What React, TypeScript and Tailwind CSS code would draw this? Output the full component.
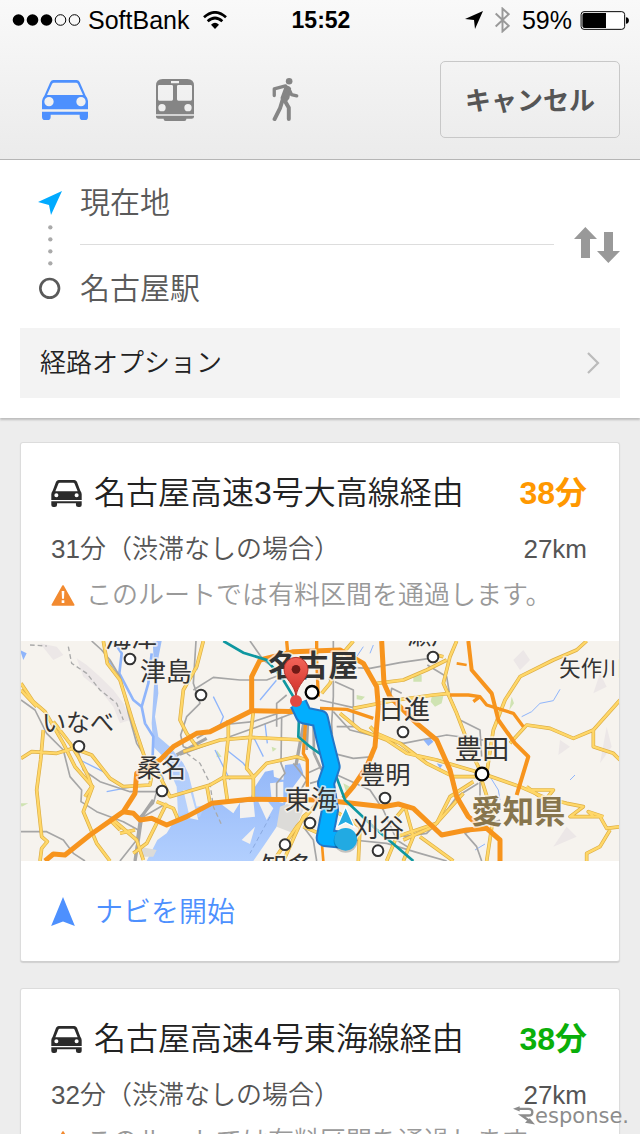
import React from 'react'

type Route = {
  id: number
  name: string
  time: string
  timeClass: string
  noTraffic: string
  distance: string
}

const routes: Route[] = [
  {
    id: 1,
    name: '名古屋高速3号大高線経由',
    time: '38分',
    timeClass: 'text-[#ff9800]',
    noTraffic: '31分（渋滞なしの場合）',
    distance: '27km',
  },
  {
    id: 2,
    name: '名古屋高速4号東海線経由',
    time: '38分',
    timeClass: 'text-[#0aaf0a]',
    noTraffic: '32分（渋滞なしの場合）',
    distance: '27km',
  },
]

const CarIcon = () => (
  <svg viewBox="0 0 138 120" className="h-10 w-[46px]" fill="currentColor" aria-hidden="true">
    <path
      fillRule="evenodd"
      d="M34 0H104Q110 0 113 6L131 47Q138 55 138 63V88H0V63Q0 55 7 47L25 6Q28 0 34 0ZM36 8Q32 8 30 12L15 45H123L108 12Q106 8 102 8ZM21 51A14 14 0 1 0 21 79A14 14 0 1 0 21 51ZM117 51A14 14 0 1 0 117 79A14 14 0 1 0 117 51Z"
    />
    <path d="M0 95H138V110Q138 120 129 120H122Q113 120 113 110V104H26V110Q26 120 17 120H9Q0 120 0 110Z" />
  </svg>
)

const SmallCarIcon = () => (
  <svg viewBox="0 0 90 80" className="mr-3 h-[27px] w-[31px] shrink-0 text-[#2b2b2b]" fill="currentColor" aria-hidden="true">
    <path
      fillRule="evenodd"
      d="M22 0H68Q73 0 76 5L86 32Q90 37 90 42V59H0V42Q0 37 4 32L14 5Q17 0 22 0ZM25 8Q22 8 21 11L12 33H78L69 11Q68 8 65 8ZM15 39A6 6 0 1 0 15 51A6 6 0 1 0 15 39ZM75 39A6 6 0 1 0 75 51A6 6 0 1 0 75 39Z"
    />
    <path d="M0 63H90V74Q90 80 84 80H80Q73 80 73 74V69H17V74Q17 80 10 80H6Q0 80 0 74Z" />
  </svg>
)

const TrainIcon = () => (
  <svg viewBox="0 0 114 126" className="h-[42px] w-[38px]" fill="currentColor" aria-hidden="true">
    <path
      fillRule="evenodd"
      d="M20 0H94Q114 0 114 20V106H0V20Q0 0 20 0ZM45 6V13H69V6ZM10 18Q6 18 6 22V61Q6 65 10 65H47Q51 65 51 61V22Q51 18 47 18ZM67 18Q63 18 63 22V61Q63 65 67 65H104Q108 65 108 61V22Q108 18 104 18ZM18 75A11 11 0 1 0 18 97A11 11 0 1 0 18 75ZM96 75A11 11 0 1 0 96 97A11 11 0 1 0 96 75Z"
    />
    <path d="M0 110H114V113Q114 119 107 119H91V121Q91 126 85 126H29Q23 126 23 121V119H7Q0 119 0 113Z" />
  </svg>
)

const WalkIcon = () => (
  <svg viewBox="0 0 80 130" className="h-[43px] w-[27px]" fill="none" stroke="currentColor" strokeLinejoin="round" strokeLinecap="round" aria-hidden="true">
    <circle cx="51" cy="10" r="10" fill="currentColor" stroke="none" />
    <path d="M42 25L29 60L38 72L48 60L53 32Z" fill="currentColor" strokeWidth="8" />
    <path d="M40 24L6 33V53" strokeWidth="10" />
    <path d="M49 30L58 50L74 54" strokeWidth="10" />
    <path d="M32 64L24 90L7 124" strokeWidth="12" />
    <path d="M37 67L50 90V124" strokeWidth="12" />
  </svg>
)

const StatusBar = () => (
  <div className="grid h-10 grid-cols-[1fr_auto_1fr] items-center pr-[10px] pl-3 text-black">
    <div className="flex items-center gap-[6px]">
      <svg viewBox="0 0 70 14" className="h-[14px] w-[70px]" aria-hidden="true">
        <circle cx="6.5" cy="7" r="5.8" />
        <circle cx="20.5" cy="7" r="5.8" />
        <circle cx="34.5" cy="7" r="5.8" />
        <circle cx="48.5" cy="7" r="5.3" fill="none" stroke="black" />
        <circle cx="62.5" cy="7" r="5.3" fill="none" stroke="black" />
      </svg>
      <span className="text-[25px] leading-8">SoftBank</span>
      <svg viewBox="0 0 72 54" className="ml-2 h-[18px] w-6" fill="none" stroke="black" strokeWidth="8" aria-hidden="true">
        <path d="M3 19Q36 -11 69 19" />
        <path d="M14 31Q36 11 58 31" />
        <path d="M24 41Q36 30 48 41L36 54Z" fill="black" stroke="none" />
      </svg>
    </div>
    <span className="text-[23px] leading-8 font-bold">15:52</span>
    <div className="flex items-center justify-end">
      <svg viewBox="0 0 54 54" className="mr-3 h-[18px] w-[18px]" aria-hidden="true">
        <path d="M54 0L30 54L27 27L0 24Z" />
      </svg>
      <svg viewBox="0 0 46 80" className="mr-3 h-[26px] w-[15px]" fill="none" stroke="#999" strokeWidth="6" aria-hidden="true">
        <path d="M2 20L42 58L23 75V5L42 22L2 60" />
      </svg>
      <span className="text-[25px] leading-8">59%</span>
      <svg viewBox="0 0 150 58" className="ml-2 h-[19px] w-[50px]" aria-hidden="true">
        <rect x="2" y="2" width="133" height="54" rx="9" fill="white" stroke="black" strokeWidth="3" />
        <path d="M12 6H78V52H12Q6 52 6 46V12Q6 6 12 6Z" />
        <path d="M139 19Q148 20 148 29T139 39Z" />
      </svg>
    </div>
  </div>
)

const SearchForm = () => (
  <section className="relative bg-white px-5 pt-5 pb-5 shadow-[0_2px_2px_#bdbdbd]">
    <div className="flex items-center">
      <div className="flex w-[60px] shrink-0 justify-center">
        <svg viewBox="0 0 72 324" className="h-[108px] w-6" aria-hidden="true">
          <path d="M72 0L39 72L33 42L0 33Z" fill="#00aaff" />
          <g fill="#aaa">
            <circle cx="37" cy="109" r="6.5" />
            <circle cx="37" cy="145" r="6.5" />
            <circle cx="37" cy="181" r="6.5" />
            <circle cx="37" cy="217" r="6.5" />
          </g>
          <circle cx="35" cy="292" r="28" fill="none" stroke="#5a5a5a" strokeWidth="8" />
        </svg>
      </div>
      <div className="min-w-0 flex-1">
        <input
          type="text"
          aria-label="出発地"
          defaultValue="現在地"
          className="block h-11 w-full pb-1 text-3xl font-[350] text-[#5a5a5a] outline-none"
        />
        <div className="mt-5 mb-[21px] h-px bg-[#ddd]" />
        <input
          type="text"
          aria-label="目的地"
          defaultValue="名古屋駅"
          className="block h-11 w-full pb-1 text-3xl font-[350] text-[#5a5a5a] outline-none"
        />
      </div>
      <button type="button" aria-label="出発地と目的地を入れ替え" className="ml-5 text-[#999]">
        <svg viewBox="0 0 138 108" className="h-9 w-[46px]" fill="currentColor" aria-hidden="true">
          <path d="M34 0L69 36H48V93H21V36H0Z" />
          <path d="M90 15H117V72H138L103 108L69 72H90Z" />
        </svg>
      </button>
    </div>
    <button
      type="button"
      className="mt-[18px] flex h-[70px] w-full items-center justify-between bg-[#f3f3f3] px-5 text-[26px] font-[350] text-[#222]"
    >
      経路オプション
      <svg viewBox="0 0 14 24" className="h-6 w-[14px]" fill="none" stroke="#bbb" strokeWidth="2.2" aria-hidden="true">
        <path d="M2 2L12 12L2 22" />
      </svg>
    </button>
  </section>
)

// map units are thirds of a pixel at the card's normal width
const yellowRoads = [
  'M3 130L40 185L75 215L130 310L165 380L218 440L190 515L230 610L270 663M70 270L62 360L50 450L65 590L82 605L65 625L60 663M3 355L35 335L110 340L160 325L215 345L270 415L310 440L390 435L400 380',
  'M3 150L50 200M100 245L150 310L175 350L205 410L215 440L195 470',
  'M250 3L262 70L300 120L340 250L370 340L380 370M550 3L530 80L490 150L480 240L500 280L530 320M490 335L600 300L690 292L850 300M415 400L450 470L570 435L610 412H700L740 370L830 350L860 360',
  'M625 240L625 290L612 410L622 480M700 215L690 300L680 385L700 410V480M560 435L570 490M440 490L380 610L340 640M345 570L300 580M270 540L300 570M410 485L460 505L475 540M280 540L350 600L370 660',
  'M1310 3L1290 50L1270 130L1310 220L1360 350L1385 400M1270 50L1230 40M1000 3L960 50L930 130L905 160M1070 130L1150 120L1220 90L1280 60',
  'M960 220L1020 270L1100 300L1160 340L1250 360L1385 400L1500 440L1580 475L1600 450H1520M1050 260L1070 280L1140 310L1220 370L1300 410H1380',
  'M1000 205L1130 180L1240 165L1290 160M1400 400L1420 270L1455 180L1500 110L1600 60L1670 30L1700 3',
  'M1470 310L1520 255L1590 265L1660 295L1720 270L1800 180M1720 270L1720 320L1780 340L1800 360M1520 440L1560 470L1640 490L1690 500L1650 530H1740L1760 565L1800 560',
  'M1720 530L1705 515L1750 530M1770 570L1740 620L1700 640V663M1100 663L1130 590L1250 550L1290 470L1360 425M1150 663L1180 590L1155 500L1130 530M1385 420L1420 530L1400 663M1200 590L1300 663',
  'M920 470L850 530L790 663M850 560L920 590M900 480L830 560L760 663M940 510L990 540L1020 560L1015 663M1330 460L1240 560L1150 600',
]

const RouteMap = () => (
  <svg viewBox="3 3 1794 660" className="block w-full" role="img" aria-label="名古屋周辺の地図">
    <defs>
      <linearGradient id="sea" x1="0" y1="0" x2="0" y2="1">
        <stop offset="0" stopColor="#93b7f8" />
        <stop offset="1" stopColor="#b2cffe" />
      </linearGradient>
      <linearGradient id="pin" x1="0" y1="0" x2="0" y2="1">
        <stop offset="0" stopColor="#f26459" />
        <stop offset="1" stopColor="#cf3029" />
      </linearGradient>
    </defs>
    <rect width="1800" height="666" fill="#f6f3ee" />

    <g fill="#ece7e7">
      <path d="M60 10L110 20L130 45L100 60ZM170 55L200 75L240 110L280 150L310 190L330 240L300 250L280 200L240 150L190 110Z" />
      <path d="M1510 30L1530 60L1500 90L1480 60ZM1740 100L1760 140L1720 160ZM1760 260L1775 320L1740 370ZM1620 300L1650 320L1615 345ZM1640 560L1670 590L1600 620Z" />
    </g>
    <g fill="#cfe3b2">
      <path d="M1235 170L1270 168L1265 190L1245 200L1232 185ZM1180 105H1205V125H1180ZM1475 170L1482 190L1468 210ZM1010 165L1035 170L1025 180L1010 178ZM970 430L990 440L978 455ZM0 490L25 490L5 500ZM590 330L605 350L590 352ZM755 320L770 326L758 335ZM1040 395L1050 410L1035 412ZM990 55H1010V68H990Z" />
    </g>

    <g fill="url(#sea)">
      <path d="M380 663L412 600L440 580L470 530L540 500L600 490L640 520L665 480L690 478L705 440L735 395L760 390L762 410L790 420L795 375L840 370L850 400L820 440L800 480L770 560L735 612L700 663Z" />
      <path d="M398 3H425L410 80L415 160L405 230L415 290L450 320L490 370L505 400L530 500L555 495L540 530L475 545L470 440L430 350L400 320L395 250L403 120L400 40Z" opacity="0.9" />
    </g>
    <g fill="none" stroke="#8fb5fb">
      <path strokeWidth="8" d="M280 3L305 40L298 100L340 180L365 200L375 250L400 290L398 350L430 420M395 40L385 130L365 200" />
      <path strokeWidth="4" d="M265 60L300 110M550 3L530 90M700 290L730 350M580 170L610 230L600 255M770 120L720 180M735 250L742 310M620 330L670 370L700 410M180 360L260 400M260 455L340 440M585 330L630 420" />
      <path strokeWidth="3" d="M1620 148L1600 182L1560 190L1535 215L1505 230M1650 420L1665 405M1410 410L1435 450L1440 480M1365 630L1395 612M1060 15L1050 40M1010 50L1030 20" />
    </g>
    <path d="M1210 300L1230 293L1240 305L1225 318ZM0 30L20 40L10 60ZM1250 370L1268 375L1260 385Z" fill="#8fb5fb" />
    <g fill="#f3f1ef">
      <path d="M660 490L700 480L705 530L660 535ZM665 600L705 560L690 612ZM715 485L740 480L760 505L740 540ZM490 450L510 450L535 540L510 535ZM750 430L790 425V490L755 480Z" />
    </g>
    <path d="M780 500L830 480L850 510L820 580L770 560ZM360 620L410 630L400 650H360Z" fill="#dcdbd8" />

    <g fill="none" stroke="#a6a6a6" strokeWidth="5" strokeLinejoin="round">
      <path d="M3 180L45 210L80 280L130 330L150 410L185 450L183 485L230 515L310 545L355 570L345 663M3 575H80L130 600L160 640L195 663" />
      <path d="M175 335L190 390L240 425L330 455H410L400 490L360 530L350 600L300 663M215 3L245 30L270 60L300 110L325 220L350 310L375 350" />
      <path d="M528 3L520 130L540 190L500 230L482 285L490 320L520 330M520 150L580 112L660 120H740L780 105M480 345L560 315L700 265L830 215" />
      <path d="M530 295L600 255L700 245L820 205M770 260V190L800 165M785 230L783 370L795 400L770 430V480M440 490L370 530" />
      <path d="M690 3L730 60L800 110M940 3V90L940 170L935 250L940 340L1000 355L1060 350M940 80L1050 85L1140 68L1230 55" />
      <path d="M945 125L1000 150V260H950M900 180L1010 205L1150 175L1290 160M1110 175L1115 145L1145 160" />
      <path d="M1222 75L1280 110L1290 170L1320 240L1380 270L1385 350M940 215L990 270L1150 310L1280 285L1390 300" />
      <path d="M940 400L1050 450L1090 510L1130 600L1170 625M1380 425V470M1375 430L1310 470L1260 540L1220 580L1150 590" />
      <path d="M1440 540L1335 580L1370 620L1385 663M1000 600L1100 610L1200 640L1280 663M850 560L880 600L890 663M820 370L860 420L830 470M862 400L905 380M870 430L905 420" />
      <path d="M865 220L860 330M880 230L882 340L905 390" strokeWidth="8" />
      <path d="M400 480L365 530L355 600L345 663M470 345L560 295M855 230L828 375M930 120L945 60" strokeWidth="10" />
    </g>
    <path d="M30 15L80 18M145 20L155 70L200 100L240 150L290 190L310 240M500 340L540 370L570 430L580 500L605 555" fill="none" stroke="#aaa" strokeWidth="4" strokeDasharray="14 9" />
    <path d="M750 530L690 640" fill="none" stroke="#8aa9e0" strokeWidth="3" strokeDasharray="14 9" />

    <g fill="none" stroke="#dcae45" strokeWidth="11" strokeLinejoin="round">
      {yellowRoads.map((d) => (
        <path key={d} d={d} />
      ))}
    </g>
    <g fill="none" stroke="#ffd768" strokeWidth="7" strokeLinejoin="round">
      {yellowRoads.map((d) => (
        <path key={d} d={d} />
      ))}
    </g>

    <g fill="none" stroke="#f7941d" strokeWidth="15" strokeLinejoin="round">
      <path d="M75 663L100 642L135 645L210 585L310 515L345 460L350 400L420 360L460 320L530 280L570 275L695 212L880 216" />
      <path d="M310 515L340 520L360 540L395 535L440 555L500 530L575 490L690 478L910 480L1090 500L1135 492L1180 505L1265 585L1340 570L1400 565L1440 600V663" />
      <path d="M695 212V110L720 60L820 35L960 30L1030 70L1070 140L1075 200L1065 320L1040 380L1000 440L970 475" />
      <path d="M1085 3L1092 130L1110 170L1190 250L1250 300L1290 390L1310 470L1345 530L1380 560" />
      <path d="M1345 3L1355 90L1415 160L1435 240L1485 310L1525 350L1490 465" strokeWidth="12" />
      <path d="M1290 165L1345 165L1380 170L1400 195L1480 220L1510 260M1360 185L1380 170M900 205L980 208L1060 235M800 3L805 60M890 3V60L895 170M860 200L850 340L862 360V440" strokeWidth="10" />
      <path d="M920 480L900 540L910 663M1310 70L1340 75" strokeWidth="8" />
    </g>

    <path d="M610 3L670 38L740 60L790 120L838 200L835 290L870 320L905 345M945 400L975 480L1060 560L1180 663" fill="none" stroke="#0f97a0" strokeWidth="8" />

    <g fill="none" strokeLinejoin="round">
      <path d="M835 190L852 226L900 236L912 290L935 380L918 430L930 510L914 594L975 600" stroke="#2177c9" strokeWidth="54" />
      <path d="M835 190L852 226L900 236L912 290L935 380L918 430L930 510L914 594L975 600" stroke="#02aefe" strokeWidth="42" />
    </g>

    <g fill="white" stroke="#333" strokeWidth="6">
      <circle cx="330" cy="57" r="16" />
      <circle cx="543" cy="165" r="16" />
      <circle cx="177" cy="319" r="16" />
      <circle cx="426" cy="453" r="16" />
      <circle cx="870" cy="549" r="16" />
      <circle cx="795" cy="614" r="16" />
      <circle cx="1239" cy="51" r="16" />
      <circle cx="1149" cy="276" r="16" />
      <circle cx="1095" cy="474" r="16" />
      <circle cx="1074" cy="632" r="16" />
      <circle cx="876" cy="157" r="19" stroke="black" strokeWidth="7" />
      <circle cx="1386" cy="402" r="19" stroke="black" strokeWidth="7" />
    </g>

    <g fill="#333" stroke="#f8f5f0" strokeOpacity="0.75" strokeWidth="10" strokeLinejoin="round" paintOrder="stroke" fontSize="78">
      <text x="360" y="124">津島</text>
      <text x="256" y="20">海津</text>
      <text x="66" y="274" fontSize="72">いなべ</text>
      <text x="350" y="410" fontSize="74">桑名</text>
      <text x="794" y="508">東海</text>
      <text x="724" y="709">知多</text>
      <text x="1162" y="12" fontSize="72">瀬戸</text>
      <text x="1074" y="238">日進</text>
      <text x="1304" y="356" fontSize="82">豊田</text>
      <text x="1020" y="432" fontSize="76">豊明</text>
      <text x="1000" y="590" fontSize="76">刈谷</text>
      <text x="1618" y="108" fontSize="64">矢作川</text>
      <text x="745" y="108" fontSize="90" fontWeight="700">名古屋</text>
      <text x="1354" y="550" fontSize="94" fontWeight="700" fill="#87754d">愛知県</text>
    </g>

    <path d="M828 170C824 130 792 118 792 88A36 36 0 0 1 864 88C864 118 832 130 828 170Z" fill="url(#pin)" stroke="#b3322b" strokeWidth="3" />
    <circle cx="828" cy="88" r="13" fill="#701a16" />
    <circle cx="828" cy="183" r="18" fill="#e04a42" />
    <path d="M977 500L1004 562L977 548L950 562Z" fill="#25abe2" stroke="white" strokeWidth="4" />
    <circle cx="977" cy="602" r="36" fill="#000" opacity="0.2" />
    <circle cx="977" cy="598" r="34" fill="#22aae2" />
  </svg>
)

const RouteCard: React.FC<{ route: Route }> = ({ route }) => (
  <article className="rounded-[3px] border border-[#dcdcdc] border-b-[#cfcfcf] bg-white shadow-[0_1px_1px_#d0d0d0]">
    <div className="py-[30px] pr-8 pl-[30px]">
      <div className="flex h-10 items-center text-[32px] leading-10">
        <SmallCarIcon />
        <h2 className="flex-1 font-[350] text-[#222]">{route.name}</h2>
        <strong className={`font-bold ${route.timeClass}`}>{route.time}</strong>
      </div>
      <div className="mt-5 flex justify-between text-[26px] leading-8 font-[350] text-[#555]">
        <span>{route.noTraffic}</span>
        <span>{route.distance}</span>
      </div>
      <div className="mt-[14px] flex items-center text-[26px] leading-8 font-[350] text-[#999]">
        <svg viewBox="0 0 70 63" className="mr-[11px] h-[21px] w-6 shrink-0" aria-hidden="true">
          <path d="M35 3L67 60H3Z" fill="#f28a30" stroke="#f28a30" strokeWidth="5" strokeLinejoin="round" />
          <path d="M31 18H39L38 41H32ZM31 46H39V54H31Z" fill="white" />
        </svg>
        <p className="whitespace-nowrap">このルートでは有料区間を通過します。</p>
      </div>
    </div>
    <RouteMap />
    <button type="button" className="flex h-[100px] w-full items-center px-[30px] text-[28px] font-[350] text-[#4d90fe]">
      <svg viewBox="0 0 72 88" className="mr-5 h-[29px] w-6" fill="currentColor" aria-hidden="true">
        <path d="M36 0L72 88L36 74L0 88Z" />
      </svg>
      <span className="pt-1">ナビを開始</span>
    </button>
  </article>
)

const Watermark = () => (
  <div className="absolute right-[11px] bottom-[6px] flex items-end text-[#8c8c8c]">
    <svg viewBox="0 0 66 56" className="mb-[3px] h-[19px] w-[22px]" fill="none" stroke="currentColor" role="img" aria-label="R">
      <path d="M14 8H46Q58 8 58 18T46 28H26L52 46" strokeWidth="7" />
      <path d="M0 8L20 0V16ZM66 55L36 50L50 36Z" fill="currentColor" stroke="none" />
    </svg>
    <span className="font-['DejaVu_Sans'] text-[21px] leading-6">esponse.</span>
  </div>
)

const App: React.FC = () => {
  return (
    <div
      lang="ja"
      className="relative flex h-screen flex-col overflow-hidden border-b-2 border-white bg-[#ededed] font-['Liberation_Sans','Noto_Sans_CJK_JP',sans-serif]"
    >
      <header className="shrink-0 border-b border-[#b5b5b5] bg-linear-to-b from-[#f9f9f9] to-[#ebebeb]">
        <StatusBar />
        <nav className="flex h-[119px] items-center justify-between pr-5 pl-[10px]">
          <div className="flex text-[#858585]">
            <button type="button" aria-label="車" aria-pressed="true" className="flex h-16 w-[110px] items-center justify-center text-[#4d90fe]">
              <CarIcon />
            </button>
            <button type="button" aria-label="電車" className="flex h-16 w-[110px] items-center justify-center">
              <TrainIcon />
            </button>
            <button type="button" aria-label="徒歩" className="flex h-16 w-[110px] items-center justify-center">
              <WalkIcon />
            </button>
          </div>
          <button
            type="button"
            className="h-[77px] w-[180px] rounded-[5px] border border-[#c8c8c8] pt-1 text-[26px] font-bold text-[#555]"
          >
            キャンセル
          </button>
        </nav>
      </header>
      <SearchForm />
      <main className="flex flex-col gap-[26px] px-5 pt-6">
        {routes.map((route) => (
          <RouteCard key={route.id} route={route} />
        ))}
      </main>
      <Watermark />
    </div>
  )
}

export default App
